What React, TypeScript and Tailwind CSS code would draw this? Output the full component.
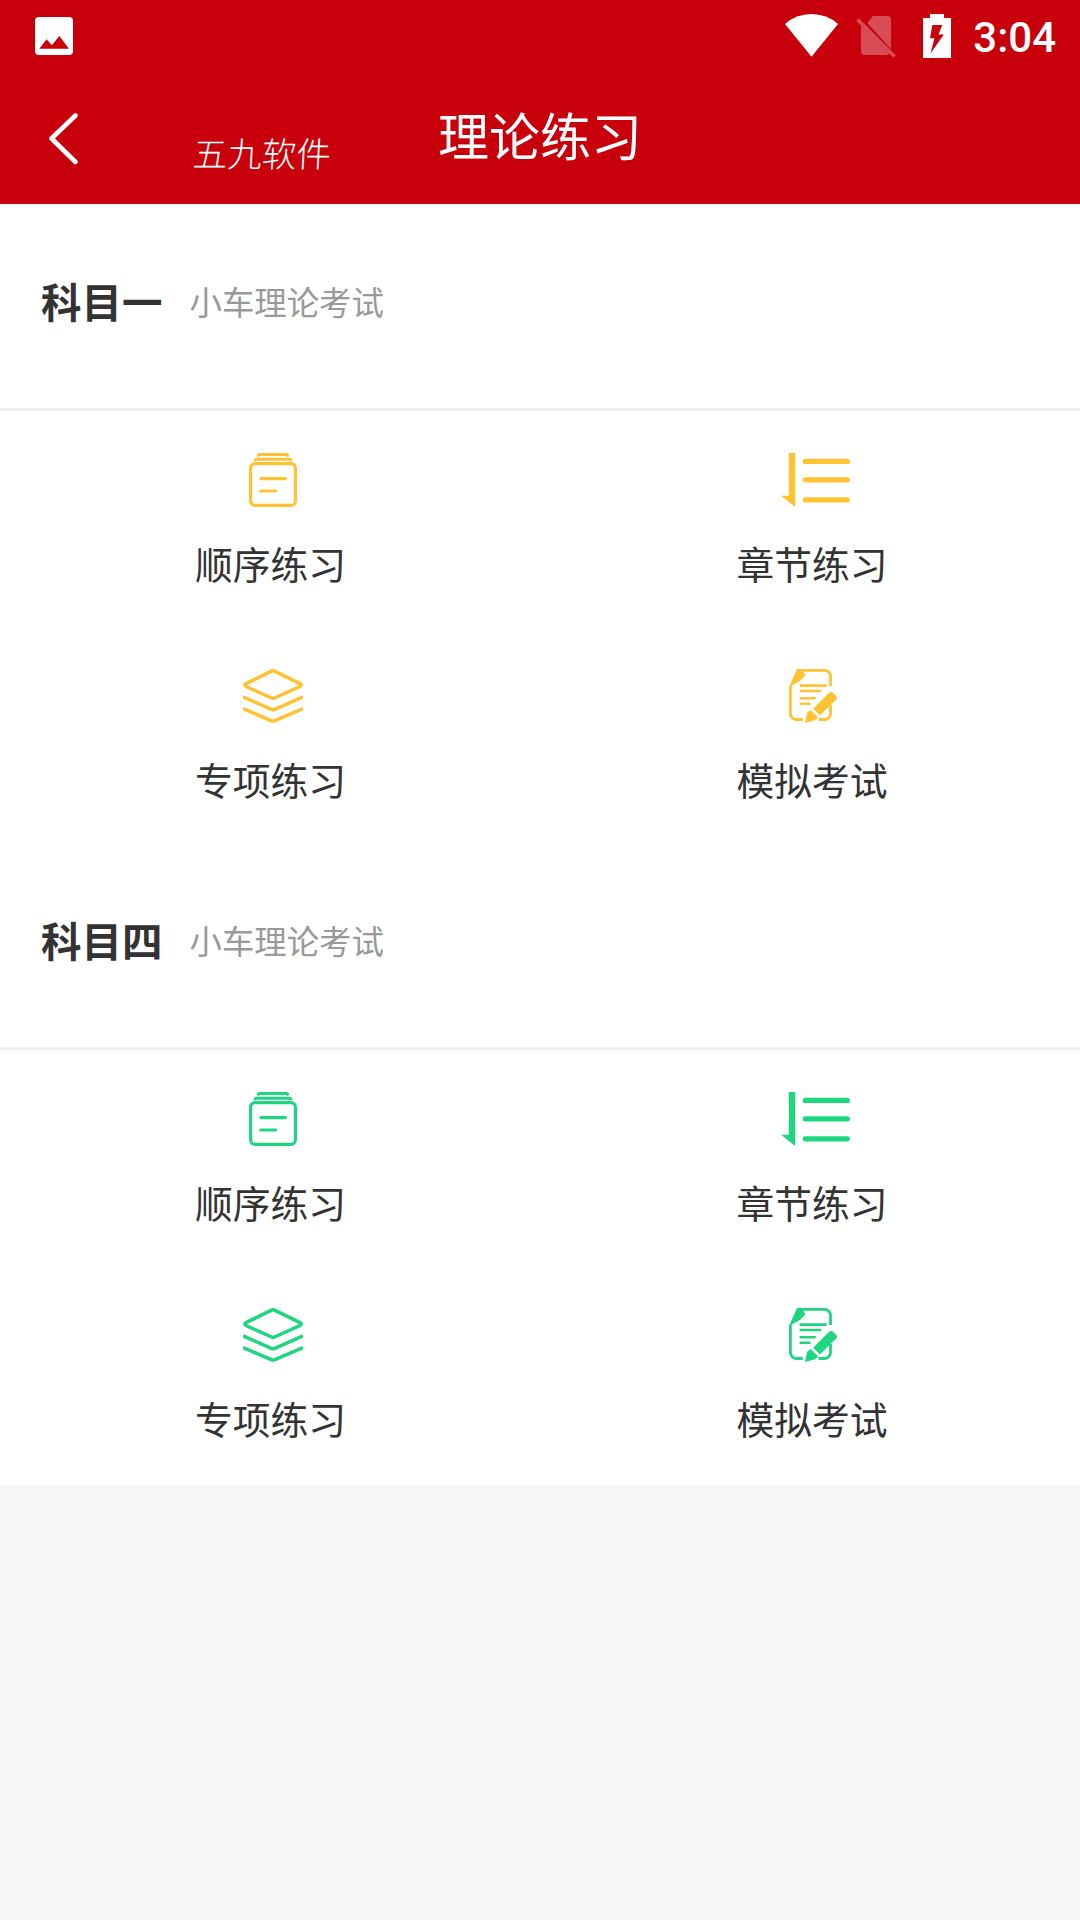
import type { ComponentType } from "react";

type IconProps = { className?: string };

function SequenceIcon({ className }: IconProps) {
  return (
    <svg width="48" height="54" viewBox="0 0 48 54" fill="none" stroke="currentColor" strokeWidth="3.2" className={className}>
      <path d="M8.300 3 10.500 1.500h27L39.700 3M5 7.500 7.200 6.300h33.600L43 7.500" strokeLinejoin="round" strokeWidth="2.900" />
      <rect x="1.600" y="10.600" width="44.800" height="41.800" rx="4.500" />
      <path d="M11.800 25.600h24.600M11.800 38h14.700" strokeLinecap="round" />
    </svg>
  );
}

function ChapterIcon({ className }: IconProps) {
  return (
    <svg width="69" height="54" viewBox="0 0 69 54" fill="none" className={className}>
      <path d="M7.800 0h6.400v54L0 42.800h7.800z" fill="currentColor" />
      <path d="M24.300 8.400h42M24.300 26.800h42M24.300 46.800h42" stroke="currentColor" strokeWidth="5.200" strokeLinecap="round" />
    </svg>
  );
}

function LayersIcon({ className }: IconProps) {
  return (
    <svg width="60" height="54" viewBox="0 0 60 54" fill="none" stroke="currentColor" strokeWidth="3.500" className={className}>
      <path d="M28.600 2.100 3 14.600Q.8 16 3 17.600L28.600 29q1.400.7 2.800 0L57 17.600q2.200-1.600 0-3L31.400 2.100q-1.400-.7-2.800 0Z" />
      <path d="M0 27.800 28.800 40.600q1.200.5 2.400 0L60 27.800M0 39.600l28.800 12.200q1.200.5 2.400 0L60 39.600" />
    </svg>
  );
}

function ExamIcon({ className }: IconProps) {
  return (
    <svg width="48" height="54" viewBox="0 0 48 54" fill="none" className={className}>
      <path
        d="M10 1.400h25.500a6 6 0 0 1 6 6V17M1.400 17v27.500a6 6 0 0 0 6 6h6.400M29.500 50.500h6a6 6 0 0 0 6-6V36"
        stroke="currentColor"
        strokeWidth="2.800"
      />
      <path d="M8 0h4.500l4 6.300-5 5.200L2.300 17 0 18z" fill="currentColor" />
      <path d="M10.600 16.600h27M10.600 22h21.600M10.600 29.300h16.200M10.600 34.700h10.800" stroke="currentColor" strokeWidth="2.600" />
      <path
        d="M24.200 39.800 40.300 23.600q1.800-1.400 3.500 0l3.600 3.600q1.300 1.500 0 3L31 46.400zM21.600 41l7.600 7.600-3.200 2.600L16 54l2.200-10.400z"
        fill="currentColor"
      />
    </svg>
  );
}

function StatusBar() {
  return (
    <div className="flex h-[72px] items-start text-white">
      <svg width="38" height="38" viewBox="0 0 38 38" className="mt-[17px] ml-[35px]">
        <rect width="38" height="38" rx="4" fill="currentColor" />
        <path d="M4.300 31.800 11.500 22.300l5.400 6L24.300 19 34 31.800z" fill="#c8000b" />
      </svg>
      <svg width="53" height="43" viewBox="0 0 53 43" className="mt-[14px] ml-auto">
        <path d="M0 10Q11 0 26.500 0T53 10L26.500 42.800z" fill="currentColor" />
      </svg>
      <svg width="40" height="44" viewBox="0 0 40 44" className="mt-[15px] ml-[18px] opacity-30">
        <path d="M17 1h14.500a3.500 3.500 0 0 1 3.500 3.500v29.800L11.300 8z" fill="currentColor" />
        <path d="M5 10.500V36.500a3.500 3.500 0 0 0 3.500 3.500H31q1.500 0 2.300-1z" fill="currentColor" />
        <path d="M1.500 4.500 38.500 41.500" stroke="currentColor" strokeWidth="3.800" />
      </svg>
      <svg width="28" height="44" viewBox="0 0 28 44" className="mt-[14px] ml-[27px]">
        <path d="M7 0h14v4h7v40H0V4h7z" fill="currentColor" />
        <path d="M9.300 11h10l-3.800 9.600h5.300L7.500 39.500l3.900-15.300H7z" fill="#c8000b" />
      </svg>
      <span className="mt-[15px] mr-[24px] ml-[22px] font-['Roboto'] text-[42px] leading-[46px] font-medium">3:04</span>
    </div>
  );
}

function Header() {
  return (
    <header className="h-[204px] bg-[#c8000b] text-white">
      <StatusBar />
      <div className="grid h-[132px] grid-cols-[1fr_auto_1fr]">
        <div className="flex items-start">
          <svg width="31" height="53" viewBox="0 0 31 53" fill="none" className="mt-[40px] ml-[48px]">
            <path d="M27.500 3.500 3.500 26.500l24 23.500" stroke="currentColor" strokeWidth="4.600" strokeLinecap="round" strokeLinejoin="round" />
          </svg>
          <span className="mt-[60px] ml-[114px] -skew-x-3 text-[34.500px] leading-[40px] font-light">五九软件</span>
        </div>
        <h1 className="mt-[32px] text-[51px] leading-[60px]">理论练习</h1>
      </div>
    </header>
  );
}

const practices: { label: string; Icon: ComponentType<IconProps>; offset: string }[] = [
  { label: "顺序练习", Icon: SequenceIcon, offset: "ml-[6px]" },
  { label: "章节练习", Icon: ChapterIcon, offset: "ml-[10px]" },
  { label: "专项练习", Icon: LayersIcon, offset: "ml-[6px]" },
  { label: "模拟考试", Icon: ExamIcon, offset: "ml-[6px]" },
];

const subjects = [
  { title: "科目一", color: "text-[#ffc233]" },
  { title: "科目四", color: "text-[#1fd680]" },
];

function Subject({ title, color }: { title: string; color: string }) {
  return (
    <section className="pb-[3px]">
      <div className="flex h-[204px] items-start border-b-[3px] border-[#efefef] pl-[41px]">
        <h2 className="mt-[64px] text-[40.500px] leading-[60px] font-bold">{title}</h2>
        <span className="mt-[64px] ml-[27px] text-[32.400px] leading-[60px] text-[#999]">小车理论考试</span>
      </div>
      <div className="grid grid-cols-2">
        {practices.map(({ label, Icon, offset }) => (
          <button key={label} type="button" className="group flex h-[216px] flex-col items-center pt-[42px]">
            <Icon className={`${offset} ${color}`} />
            <span className="mt-[29px] pl-px text-[37.800px] leading-[54px] group-even:pl-[4px]">{label}</span>
          </button>
        ))}
      </div>
    </section>
  );
}

export default function App() {
  return (
    <div className="min-h-screen w-full bg-[#f7f7f7] font-['Noto_Sans_CJK_SC',sans-serif] text-[#333]">
      <Header />
      <main className="bg-white pt-[3px]">
        {subjects.map((s) => (
          <Subject key={s.title} title={s.title} color={s.color} />
        ))}
      </main>
    </div>
  );
}
